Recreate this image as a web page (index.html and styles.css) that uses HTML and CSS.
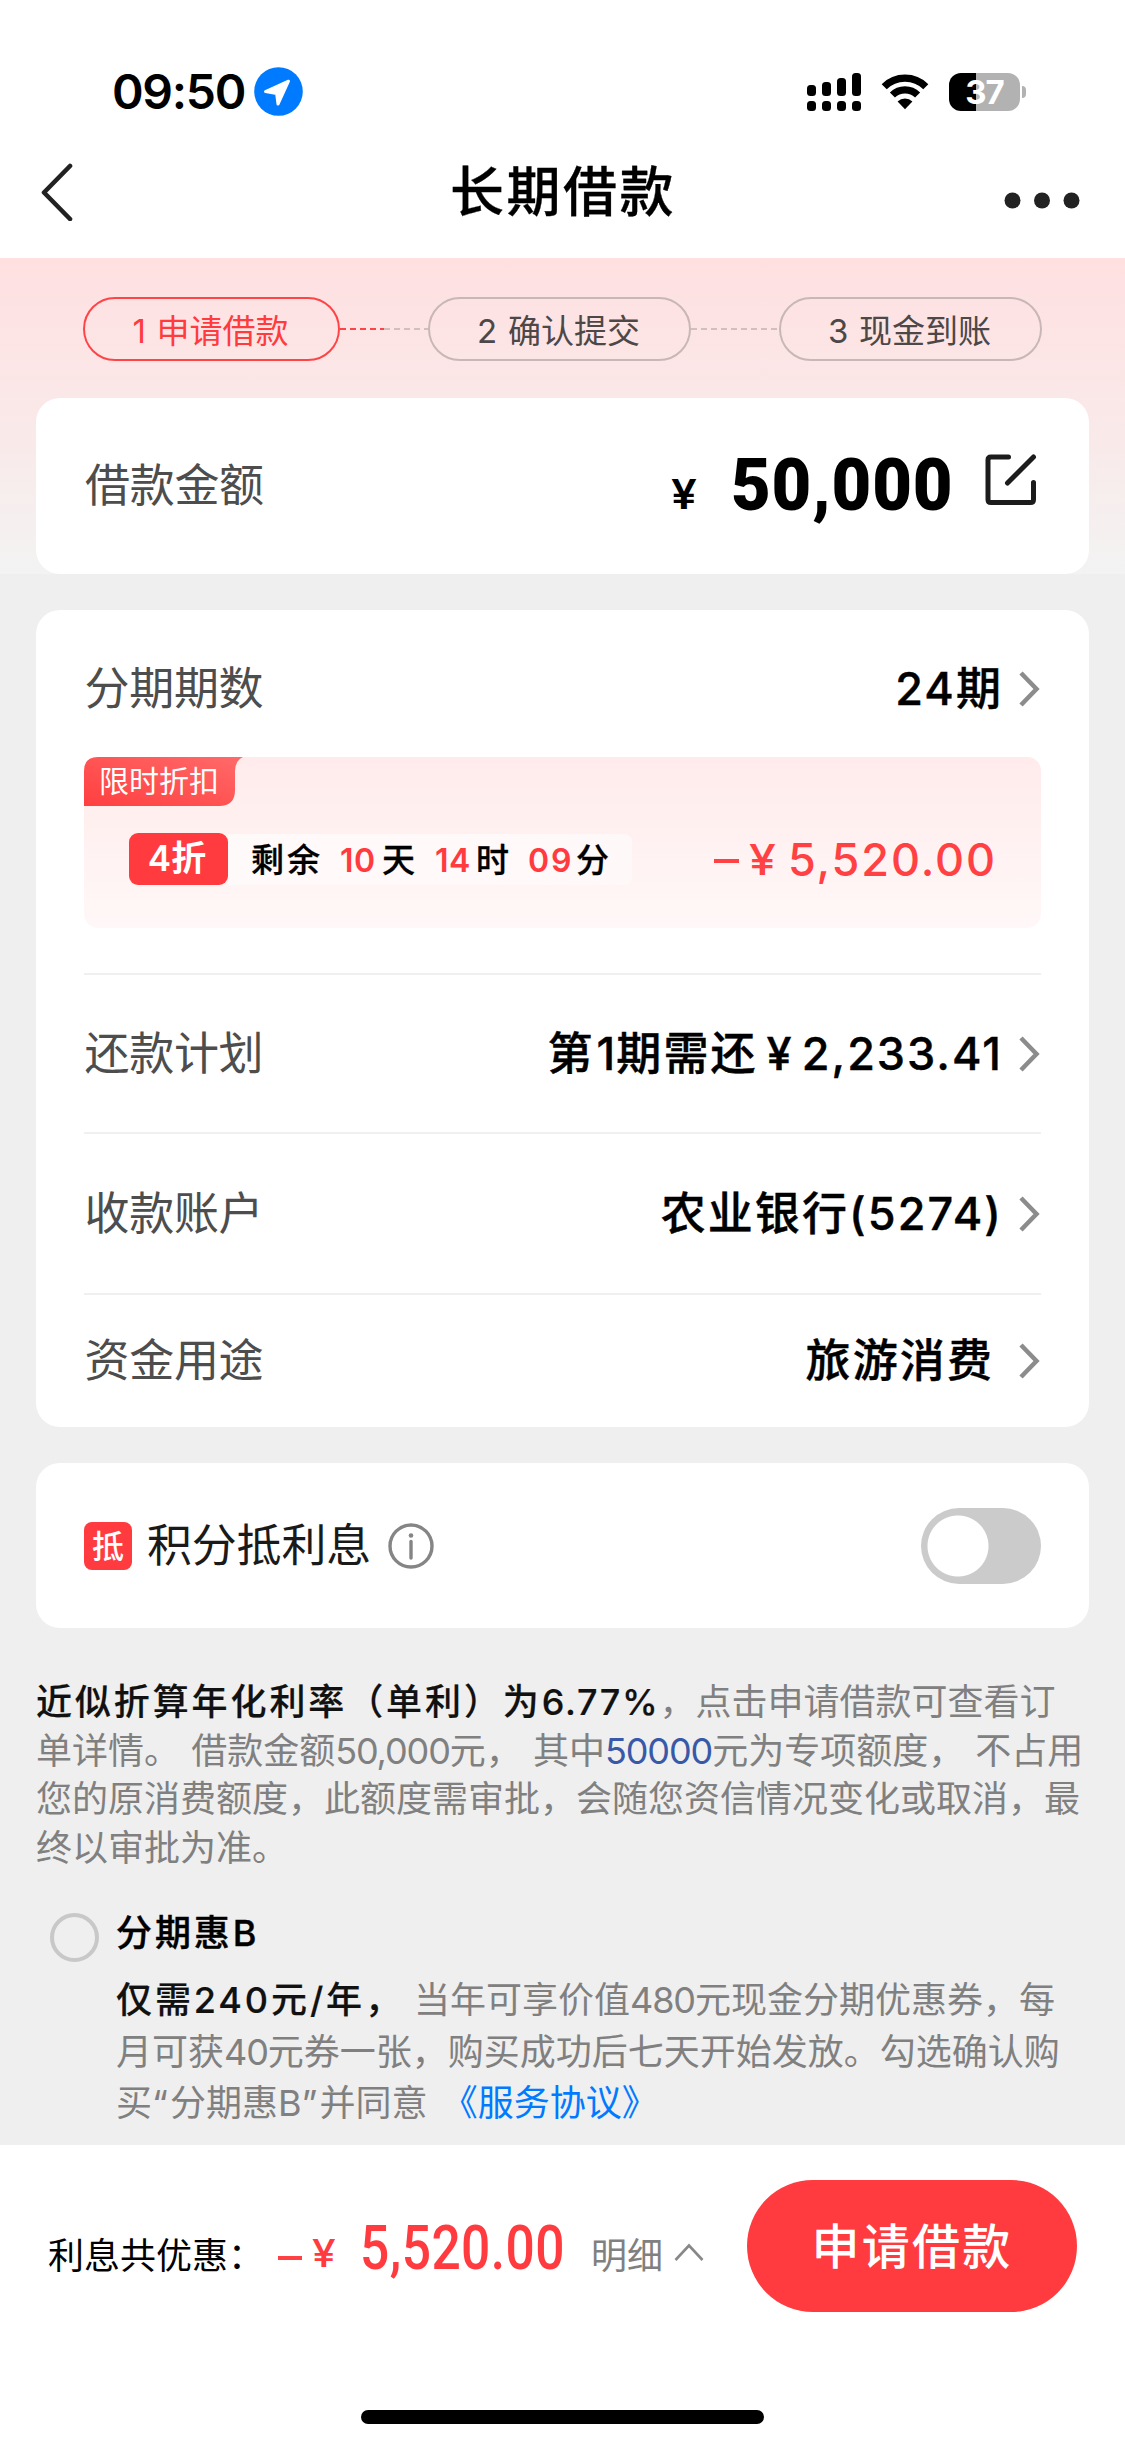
FILE: index.html
```
<!DOCTYPE html>
<html lang="zh-CN">
<head>
<meta charset="utf-8">
<title>长期借款</title>
<link rel="stylesheet" href="styles.css">
</head>
<body>
<header class="top">
  <div class="status">
    <span class="clock">09:50</span>
    <svg class="loc" width="49" height="49" viewBox="0 0 49 49"><circle cx="24.5" cy="24.5" r="24.3" fill="#007aff"/><path d="M34.5 14.2 11.5 24.6 22.6 26.4 24 37Z" fill="#fff" stroke="#fff" stroke-width="3" stroke-linejoin="round"/></svg>
    <svg class="signal" width="54" height="38" viewBox="0 0 54 38"><rect y="12" width="9" height="11" rx="3.5"/><rect x="15" y="9" width="9" height="14" rx="3.5"/><rect x="30" y="5" width="9" height="18" rx="3.5"/><rect x="45" width="9" height="23" rx="3.5"/><rect y="28" width="9" height="10" rx="3.5"/><rect x="15" y="28" width="9" height="10" rx="3.5"/><rect x="30" y="28" width="9" height="10" rx="3.5"/><rect x="45" y="28" width="9" height="10" rx="3.5"/></svg>
    <svg class="wifi" width="48" height="36" viewBox="0 0 48 36"><g fill="none" stroke="#000" stroke-width="7.2"><path d="M3.2 12.8A29.5 29.5 0 0 1 44.8 12.8"/><path d="M11.4 21A18 18 0 0 1 36.6 21"/></g><path d="M24 35.2 16.6 27.6A10.6 10.6 0 0 1 31.4 27.6Z"/></svg>
    <div class="battery"><span>37</span></div>
    <i class="nub"></i>
  </div>
  <div class="nav">
    <svg width="34" height="58" viewBox="0 0 34 58"><path d="M30 3 4 29.500 30 56" fill="none" stroke="#222" stroke-width="4.600" stroke-linecap="round" stroke-linejoin="round"/></svg>
    <h1>长期借款</h1>
    <svg class="dots" width="76" height="17" viewBox="0 0 76 17" fill="#222"><circle cx="8.500" cy="8.500" r="8"/><circle cx="38" cy="8.500" r="8"/><circle cx="67.500" cy="8.500" r="8"/></svg>
  </div>
</header>

<section class="hero">
  <div class="steps">
    <div class="step on">1 申请借款</div><i class="dash first"></i>
    <div class="step mid">2 确认提交</div><i class="dash"></i>
    <div class="step last">3 现金到账</div>
  </div>
  <div class="card amount">
    <span class="label">借款金额</span>
    <span class="yen"><b>¥</b></span>
    <span class="sum"><b>50,000</b></span>
    <svg width="52" height="52" viewBox="0 0 52 52" fill="none" stroke="#1c1c1c" stroke-width="5" stroke-linecap="round" stroke-linejoin="round"><path d="M23.500 3H6Q3 3 3 6V45.500Q3 48.500 6 48.500H45.500Q48.500 48.500 48.500 45.500V28.500M48.500 3 22.500 29"/></svg>
  </div>
</section>

<section class="card plan">
  <div class="row period"><span class="label">分期期数</span><span class="value">24期</span><svg class="chev" width="22" height="38" viewBox="0 0 22 38"><path d="M3 3 18.500 19 3 35"/></svg></div>
  <div class="offer">
    <div class="tag">
      <svg width="159" height="49" viewBox="0 0 159 49"><defs><linearGradient id="g" x1="0" y1="1" x2="1" y2="0"><stop offset="0" stop-color="#ff3f40"/><stop offset="1" stop-color="#ff6a69"/></linearGradient></defs><path d="M0 49V14Q0 0 14 0H159Q151 4 151 14V33Q151 49 135 49Z" fill="url(#g)"/></svg>
      <span>限时折扣</span>
    </div>
    <div class="deal">
      <span class="off">4折</span>
      <span class="count">剩余<em class="a">10</em>天<em class="b">14</em>时<em class="c">09</em>分</span>
      <span class="minus"></span><span class="cut-yen"><b>¥</b></span><span class="cut">5,520.00</span>
    </div>
  </div>
  <div class="row repay"><span class="label">还款计划</span><span class="value">第<i class="one">1</i>期需还<i class="cy">¥</i><i class="num">2,233.41</i></span><svg class="chev" width="22" height="38" viewBox="0 0 22 38"><path d="M3 3 18.500 19 3 35"/></svg></div>
  <div class="row bank"><span class="label">收款账户</span><span class="value">农业银行(5274)</span><svg class="chev" width="22" height="38" viewBox="0 0 22 38"><path d="M3 3 18.500 19 3 35"/></svg></div>
  <div class="row usage"><span class="label">资金用途</span><span class="value">旅游消费</span><svg class="chev" width="22" height="38" viewBox="0 0 22 38"><path d="M3 3 18.500 19 3 35"/></svg></div>
</section>

<section class="card points">
  <span class="badge">抵</span>
  <span class="ptext">积分抵利息</span>
  <svg width="46" height="46" viewBox="0 0 46 46"><circle cx="23" cy="23" r="21" fill="none" stroke="#858585" stroke-width="3.400"/><circle cx="23" cy="12.500" r="2.300" fill="#858585"/><path d="M23 18.500V35" stroke="#858585" stroke-width="3.400" stroke-linecap="round"/></svg>
  <span class="toggle"></span>
</section>

<section class="notice">
  <p><strong>近似折算年化利率（单利）为<i class="rate">6.77%</i></strong>，点击申请借款可查看订</p>
  <p class="quota">单详情。 借款金额<i>50,000</i>元， 其中<i class="blue">50000</i>元为专项额度， 不占用</p>
  <p>您的原消费额度，此额度需审批，会随您资信情况变化或取消，最</p>
  <p>终以审批为准。</p>
</section>

<section class="benefit">
  <span class="radio"></span>
  <div class="btext">
    <h2>分期惠B</h2>
    <p><strong>仅需240元/年，</strong> 当年可享价值<i>480</i>元现金分期优惠券，每</p>
    <p>月可获<i>40</i>元券一张，购买成功后七天开始发放。勾选确认购</p>
    <p>买<q>“</q>分期惠B<q>”</q>并同意 <a>《服务协议》</a></p>
  </div>
</section>

<footer class="bottom">
  <div class="bar">
    <span class="total">利息共优惠：</span>
    <span class="minus"></span><span class="fyen"><b>¥</b></span>
    <span class="fsum"><b>5,520.00</b></span>
    <span class="detail">明细</span>
    <svg class="up" width="32" height="22" viewBox="0 0 32 22"><path d="M2.500 19 16 4.500 29.500 19" fill="none" stroke="#888" stroke-width="2.600"/></svg>
    <span class="apply">申请借款</span>
  </div>
  <div class="home"></div>
</footer>
</body>
</html>
```
FILE: styles.css
```
* { box-sizing: border-box; }
body {
  margin: 0;
  width: 1125px;
  height: 2446px;
  overflow: hidden;
  background: #efefef;
  color: #000;
  font-family: "Inter", "Noto Sans CJK SC", sans-serif;
  white-space: nowrap;
  display: flex;
  flex-direction: column;
}
svg { display: block; flex: none; }
span { flex: none; }
i, em { font-style: normal; }

/* status bar and navigation */
.top { height: 258px; background: #fff; padding-top: 67px; flex: none; }
.status { display: flex; align-items: center; height: 49px; padding-left: 112px; }
.clock { width: 142px; font-size: 48px; font-weight: 600; line-height: 49px; letter-spacing: -1.3px; }
.signal { margin-left: 504px; }
.wifi { margin-left: 20px; }
.battery {
  width: 71px; height: 38px; margin-left: 20px; border-radius: 12px;
  background: linear-gradient(90deg, #000 0 27px, #b2b2b2 27px);
  color: #fff; font-weight: 700; font-size: 33px; line-height: 38px;
  text-align: center; letter-spacing: -1px;
}
.nub { width: 4px; height: 12px; margin-left: 2px; background: #b2b2b2; border-radius: 0 4px 4px 0; }
.nav { display: flex; align-items: center; height: 76px; margin-top: 38px; padding: 0 44px 0 40px; }
.nav h1 { margin: 0 0 0 376px; width: 227px; font-size: 54px; font-weight: 500; letter-spacing: 2.5px; line-height: 77px; -webkit-text-stroke: 0.3px; }
.dots { margin: 16px 0 0 327px; }

/* progress steps and amount */
.hero { height: 316px; padding: 39px 36px 0; background: linear-gradient(#ffe0e1, #f9eaea 60%, #f3f3f3); flex: none; }
.steps { display: flex; align-items: center; height: 64px; padding: 0 47px; }
.step {
  width: 263px; height: 64px; border: 2px solid #c9b6b7; border-radius: 32px;
  font-size: 33px; line-height: 64px; text-align: center; color: #4d4748;
  padding-right: 2px; word-spacing: 1.5px;
}
.step.on { width: 257px; border-color: #ff4447; color: #ff3b3e; }
.dash { flex: 1; height: 2px; background: repeating-linear-gradient(90deg, #d2bebf 0 6px, transparent 6px 10px); }
.dash.first {
  background:
    repeating-linear-gradient(90deg, #ff4447 0 6px, transparent 6px 10px) 0 0 / 50% 2px no-repeat,
    repeating-linear-gradient(90deg, #d2bebf 0 6px, transparent 6px 10px) 100% 0 / 50% 2px no-repeat;
}
.card { background: #fff; border-radius: 24px; flex: none; }
.label { font-size: 45px; color: #4d4d4d; line-height: 60px; letter-spacing: -0.3px; }
.amount { display: flex; align-items: center; height: 176px; margin-top: 37px; padding: 0 52px 0 49px; }
.yen { margin: 15px 0 0 auto; width: 30px; font: 600 41px/50px "Inter", sans-serif; }
.yen b, .cut-yen b, .fyen b { display: inline-block; font-weight: inherit; transform: scaleX(1.12); transform-origin: 0 50%; }
.sum { width: 221px; margin-left: 30px; font: 700 73px/76px Roboto, sans-serif; }
.sum b { display: inline-block; transform: scaleX(0.94) translateY(-1px); transform-origin: 0 50%; letter-spacing: 0.9px; }
.amount svg { margin: -12px 0 0 33px; }

/* loan plan */
.plan { height: 817px; margin: 36px 36px 0; padding: 0 48px; }
.row { display: flex; align-items: center; border-top: 2px solid #f0f0f0; }
.row .label { margin-left: 0.5px; }
.value { margin-left: auto; font-size: 45px; font-weight: 500; letter-spacing: 2.1px; line-height: 60px; -webkit-text-stroke: 0.4px; }
.chev { margin-left: 15px; margin-right: 1px; }
.chev path { fill: none; stroke: #8c8c8c; stroke-width: 4.500; }
.period { height: 147px; border: 0; padding-top: 11px; }
.repay { height: 159px; margin-top: 45px; }
.bank { height: 161px; }
.usage { height: 134px; }
.usage .value { margin-right: 9px; }
.one { margin: 0 -1px 0 2px; }
.cy { margin-left: 9px; }
.num { margin-left: 8px; letter-spacing: 2px; }
.offer { height: 171px; border-radius: 14px; background: linear-gradient(#ffebeb, #fff8f8); }
.tag { display: grid; width: 159px; height: 49px; }
.tag > * { grid-area: 1 / 1; }
.tag span { padding-left: 15px; color: #fff; font-size: 30px; line-height: 49px; }
.deal { display: flex; align-items: center; height: 52px; margin: 27px 45px 0; }
.off { width: 99px; height: 52px; padding-right: 3px; border-radius: 9px; background: #ff3b3f; color: #fff; font-size: 35px; font-weight: 600; line-height: 51px; text-align: center; }
.count { width: 404px; height: 51px; padding-left: 23px; border-radius: 0 8px 8px 0; background: linear-gradient(90deg, #fffafa, #fff8f8); font-size: 33px; font-weight: 500; line-height: 53px; letter-spacing: 3px; -webkit-text-stroke: 0.3px; }
.count em { display: inline-block; color: #ff3b3f; font-size: 32px; font-weight: 600; letter-spacing: 0.5px; -webkit-text-stroke: 0; }
.count .a { width: 42px; margin-left: 17px; }
.count .b { width: 41px; margin-left: 17px; }
.count .c { width: 48px; margin-left: 16px; letter-spacing: 2px; }
.minus { width: 25px; height: 4px; background: #ff4144; }
.deal .minus { margin: 3px 0 0 82px; }
.cut-yen { width: 30px; margin-left: 10px; font-size: 43px; font-weight: 500; color: #ff4144; }
.cut { margin-left: 9px; font-size: 45px; font-weight: 500; color: #ff4144; letter-spacing: 1.9px; }

/* points toggle */
.points { display: flex; align-items: center; height: 165px; margin: 36px 36px 0; padding: 0 48px; }
.badge { width: 48px; height: 48px; border-radius: 8px; background: #ff3b3f; color: #fff; font-size: 32px; font-weight: 500; line-height: 49px; text-align: center; }
.ptext { margin-left: 15px; width: 241px; font-size: 45px; line-height: 60px; letter-spacing: -0.2px; color: #1a1a1a; }
.toggle { width: 120px; height: 76px; margin-left: auto; border-radius: 38px; background: radial-gradient(circle at 37px 38px, #fff 30px, #cbcbcb 31px); }

/* notes */
.notice { height: 196px; margin: 50px 0 0 36px; color: #808080; font-size: 36px; flex: none; }
.notice p { margin: 0; height: 48.700px; line-height: 48.700px; }
.notice i, .benefit i { letter-spacing: -1.1px; }
.notice .quota { word-spacing: 1px; }
.notice .quota i { letter-spacing: -1.1px; }
.notice .rate { letter-spacing: 1.7px; }
.notice .blue { color: #3859a8; }
strong { color: #111; font-weight: 500; letter-spacing: 2.900px; -webkit-text-stroke: 0.2px; }
.benefit { display: flex; margin: 39px 0 0 50px; height: 232px; color: #808080; font-size: 36px; flex: none; }
.radio { width: 49px; height: 49px; border: 4px solid #c8c8c8; border-radius: 50%; }
.btext { margin-left: 17px; margin-top: -3px; }
.btext h2 { margin: 0 0 19px; height: 46px; color: #000; font-size: 36px; font-weight: 500; line-height: 46px; letter-spacing: 2.900px; -webkit-text-stroke: 0.4px; }
.btext p { margin: 0; height: 51.500px; line-height: 51.500px; }
.btext q { display: inline-block; quotes: none; width: 18px; }
.btext a { margin-left: 4px; color: #007aff; }

/* footer */
.bottom { flex: 1; background: #fff; padding: 34px 48px 0 48px; }
.bar { display: flex; align-items: center; height: 133px; }
.total { width: 230px; margin-top: 15px; font-size: 36px; }
.bar .minus { width: 24px; margin-top: 25px; }
.fyen { width: 30px; margin: 15px 0 0 10px; font-size: 38px; font-weight: 500; color: #ff3b3f; }
.fsum { width: 203px; margin: 5px 0 0 18px; font: 500 61px/70px Roboto, sans-serif; color: #ff3b3f; }
.fsum b { display: inline-block; font-weight: 500; transform: scaleX(0.845); transform-origin: 0 50%; letter-spacing: 0.5px; }
.detail { margin: 15px 0 0 28px; font-size: 36px; color: #808080; }
.up { margin: 12px 0 0 10px; }
.apply { width: 330px; height: 132px; margin-left: auto; border-radius: 66px; background: #ff3b3f; color: #fff; font-size: 48px; font-weight: 500; letter-spacing: 2.3px; line-height: 133px; text-align: center; }
.home { width: 403px; height: 14px; margin: 98px auto 0; border-radius: 7px; background: #000; }
```
